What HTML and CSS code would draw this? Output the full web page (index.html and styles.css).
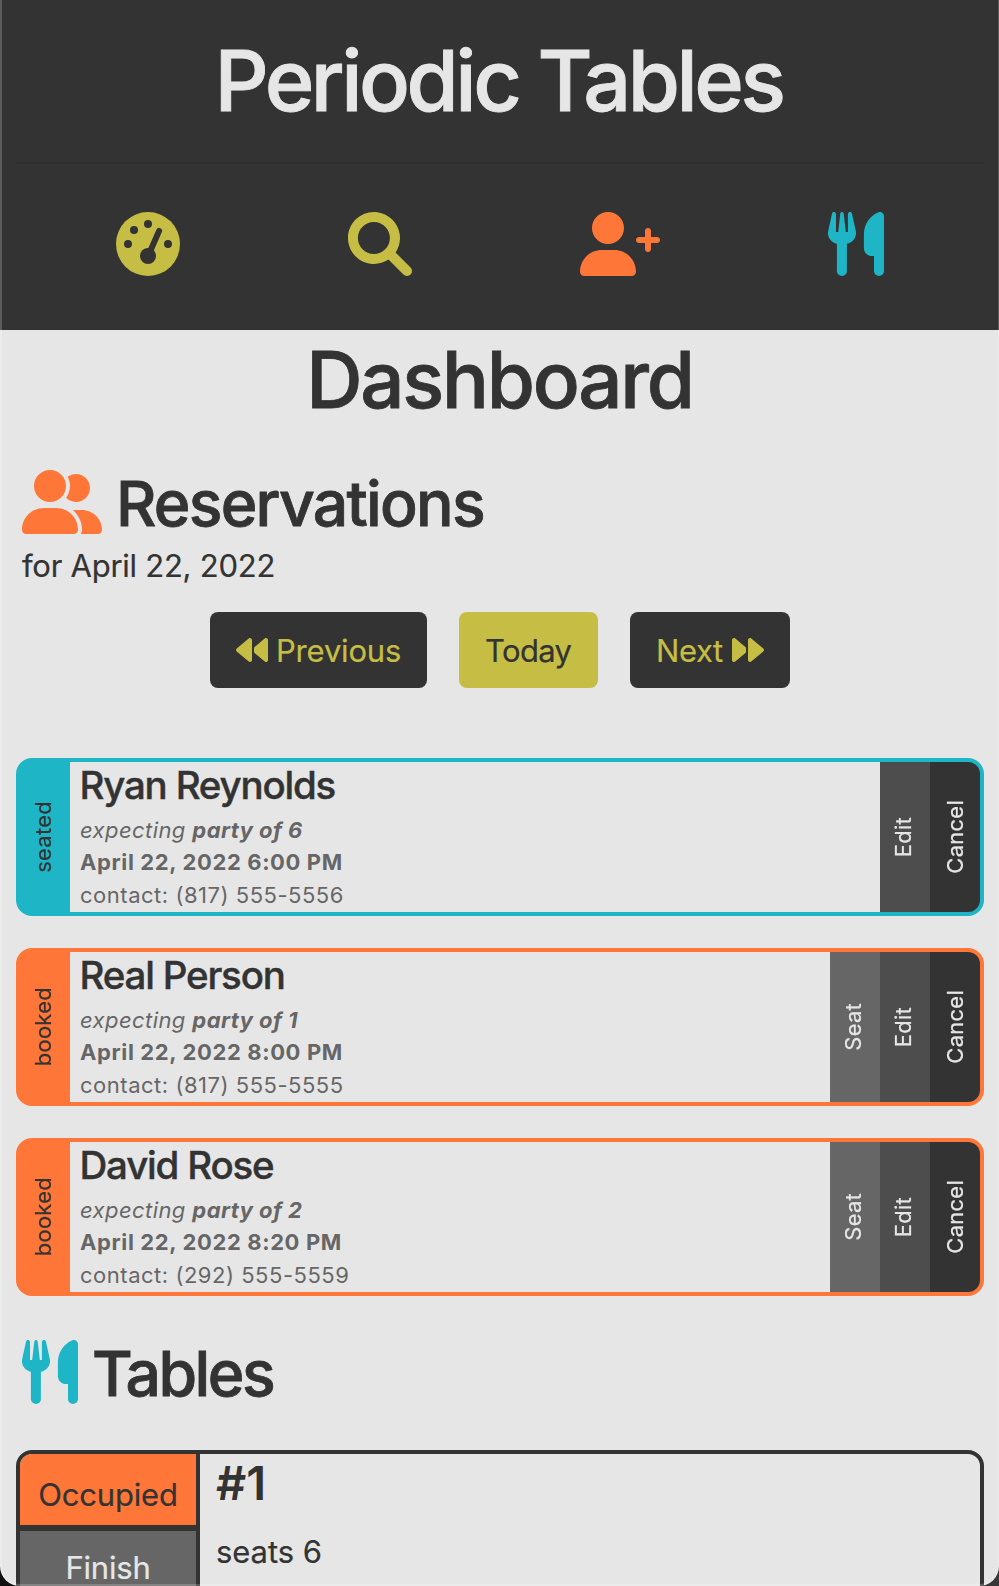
FILE: index.html
```html
<!DOCTYPE html>
<html lang="en">
<head>
<meta charset="utf-8">
<title>Periodic Tables</title>
<link rel="stylesheet" href="styles.css">
</head>
<body>
<svg class="defs" width="0" height="0">
  <symbol id="gauge" viewBox="0 0 512 512">
    <mask id="gauge-mask"><rect width="512" height="512" fill="#fff"/><circle cx="96" cy="256" r="32"/><circle cx="144" cy="144" r="32"/><circle cx="256" cy="96" r="32"/><circle cx="416" cy="256" r="32"/><circle cx="256" cy="352" r="64"/><path d="M345 151L262 340" stroke="#000" stroke-width="48" stroke-linecap="round"/></mask>
    <circle cx="256" cy="256" r="256" mask="url(#gauge-mask)"/>
  </symbol>
  <symbol id="search" viewBox="0 0 512 512"><path d="M500.3 443.7l-119.7-119.7c27.22-40.41 40.65-90.9 33.46-144.7C401.8 87.79 326.8 13.32 235.2 1.723C99.01-15.51-15.51 99.01 1.724 235.2c11.6 91.64 86.08 166.7 177.6 178.9c53.8 7.189 104.3-6.236 144.7-33.46l119.7 119.7c15.62 15.62 40.95 15.62 56.57 0C515.9 484.7 515.9 459.3 500.3 443.7zM79.1 208c0-70.58 57.42-128 128-128s128 57.42 128 128c0 70.58-57.42 128-128 128S79.1 278.6 79.1 208z"/></symbol>
  <symbol id="user-plus" viewBox="0 0 640 512"><path d="M224 256c70.7 0 128-57.31 128-128S294.7 0 224 0S96 57.31 96 128S153.3 256 224 256zM274.7 304H173.3C77.61 304 0 381.6 0 477.3C0 496.5 15.52 512 34.66 512h378.7C432.5 512 448 496.5 448 477.3C448 381.6 370.4 304 274.7 304zM616 200h-48v-48C568 138.8 557.3 128 544 128s-24 10.75-24 24v48h-48C458.8 200 448 210.8 448 224s10.75 24 24 24h48v48C520 309.3 530.8 320 544 320s24-10.75 24-24v-48h48C629.3 248 640 237.3 640 224S629.3 200 616 200z"/></symbol>
  <symbol id="user-group" viewBox="0 0 640 512"><path d="M224 256c70.7 0 128-57.31 128-128S294.7 0 224 0S96 57.31 96 128S153.3 256 224 256zM274.7 304H173.3C77.61 304 0 381.6 0 477.3C0 496.5 15.52 512 34.66 512h378.7C432.5 512 448 496.5 448 477.3C448 381.6 370.4 304 274.7 304zM479.1 320h-73.85C451.2 357.7 480 414.1 480 477.3C480 490.1 476.2 501.9 470 512h138C625.7 512 640 497.6 640 479.1C640 391.6 568.4 320 479.1 320zM432 256C493.9 256 544 205.9 544 144S493.9 32 432 32c-25.11 0-48.04 8.555-66.72 22.51C376.8 76.63 384 101.4 384 128c0 35.52-11.93 68.14-31.59 94.71C372.7 243.2 400.8 256 432 256z"/></symbol>
  <symbol id="utensils" viewBox="0 0 448 512"><path d="M221.6 148.7C224.7 161.3 224.8 174.5 222.1 187.2C219.3 199.1 213.6 211.9 205.6 222.1C191.1 238.6 173 249.1 151.1 254.1V472C151.1 482.6 147.8 492.8 140.3 500.3C132.8 507.8 122.6 512 111.1 512C101.4 512 91.22 507.8 83.71 500.3C76.21 492.8 71.1 482.6 71.1 472V254.1C50.96 250.1 31.96 238.9 18.3 222.4C10.19 212.2 4.529 200.3 1.755 187.5C-1.019 174.7-.8315 161.5 2.303 148.8L32.51 12.45C33.36 8.598 35.61 5.197 38.82 2.9C42.02 .602 45.97-.4297 49.89 .0026C53.82 .4302 57.46 2.303 60.1 5.259C62.74 8.214 64.18 12.04 64.16 16V160H81.53L98.62 11.91C99.02 8.635 100.6 5.621 103.1 3.434C105.5 1.248 108.7 .0401 111.1 .0401C115.3 .0401 118.5 1.248 120.9 3.434C123.4 5.621 124.1 8.635 125.4 11.91L142.5 160H159.1V16C159.1 12.07 161.4 8.268 163.1 5.317C166.6 2.366 170.2 .474 174.1 .0026C178-.4262 181.1 .619 185.2 2.936C188.4 5.253 190.6 8.677 191.5 12.55L221.6 148.7zM448 472C448 482.6 443.8 492.8 436.3 500.3C428.8 507.8 418.6 512 408 512C397.4 512 387.2 507.8 379.7 500.3C372.2 492.8 368 482.6 368 472V352H351.2C342.8 352 334.4 350.3 326.6 347.1C318.9 343.8 311.8 339.1 305.8 333.1C299.9 327.1 295.2 320 291.1 312.2C288.8 304.4 287.2 296 287.2 287.6L287.1 173.8C288 136.9 299.1 100.8 319.8 70.28C340.5 39.71 369.8 16.05 404.1 2.339C408.1 .401 414.2-.3202 419.4 .2391C424.6 .7982 429.6 2.62 433.9 5.546C438.2 8.472 441.8 12.41 444.2 17.03C446.7 21.64 447.1 26.78 448 32V472z"/></symbol>
  <symbol id="backward" viewBox="0 0 512 512"><path d="M459.5 71.41l-171.5 142.9v83.45l171.5 142.9C480.1 457.7 512 443.3 512 415.1V96.03C512 68.66 480.1 54.28 459.5 71.41zM203.5 71.41L11.44 231.4c-15.25 12.87-15.25 36.37 0 49.24l192 159.1c20.63 17.12 52.51 2.749 52.51-24.62v-319.1C255.1 68.66 224.1 54.28 203.5 71.41z"/></symbol>
</svg>

<div class="app">
  <header class="header">
    <h1 class="brand">Periodic Tables</h1>
    <hr class="rule">
    <nav class="nav">
      <svg class="icon lime"><use href="#gauge"/></svg>
      <svg class="icon lime"><use href="#search"/></svg>
      <svg class="icon wide orange"><use href="#user-plus"/></svg>
      <svg class="icon narrow teal"><use href="#utensils"/></svg>
    </nav>
  </header>

  <main class="main">
    <h2 class="page-title">Dashboard</h2>

    <div class="section-head">
      <svg class="icon wide orange"><use href="#user-group"/></svg>
      <h3 class="section-title">Reservations</h3>
    </div>
    <p class="date">for April 22, 2022</p>

    <div class="pager">
      <button class="btn prev"><svg class="arrow"><use href="#backward"/></svg><span>Previous</span></button>
      <button class="btn today">Today</button>
      <button class="btn next"><span>Next</span><svg class="arrow flip"><use href="#backward"/></svg></button>
    </div>

    <div class="reservations">
      <article class="card seated">
        <div class="status"><span class="vert">seated</span></div>
        <div class="info">
          <h4 class="name">Ryan Reynolds</h4>
          <p class="line party">expecting <b>party of 6</b></p>
          <p class="line when">April 22, 2022 6:00 PM</p>
          <p class="line contact">contact: (817) 555-5556</p>
        </div>
        <div class="action edit"><span class="vert">Edit</span></div>
        <div class="action cancel"><span class="vert">Cancel</span></div>
      </article>
      <article class="card booked">
        <div class="status"><span class="vert">booked</span></div>
        <div class="info">
          <h4 class="name">Real Person</h4>
          <p class="line party">expecting <b>party of 1</b></p>
          <p class="line when">April 22, 2022 8:00 PM</p>
          <p class="line contact">contact: (817) 555-5555</p>
        </div>
        <div class="action seat"><span class="vert">Seat</span></div>
        <div class="action edit"><span class="vert">Edit</span></div>
        <div class="action cancel"><span class="vert">Cancel</span></div>
      </article>
      <article class="card booked">
        <div class="status"><span class="vert">booked</span></div>
        <div class="info">
          <h4 class="name">David Rose</h4>
          <p class="line party">expecting <b>party of 2</b></p>
          <p class="line when">April 22, 2022 8:20 PM</p>
          <p class="line contact">contact: (292) 555-5559</p>
        </div>
        <div class="action seat"><span class="vert">Seat</span></div>
        <div class="action edit"><span class="vert">Edit</span></div>
        <div class="action cancel"><span class="vert">Cancel</span></div>
      </article>
    </div>

    <div class="section-head tables-head">
      <svg class="icon narrow teal"><use href="#utensils"/></svg>
      <h3 class="section-title tables-title">Tables</h3>
    </div>

    <article class="table-card">
      <div class="table-side">
        <div class="occupied">Occupied</div>
        <div class="finish">Finish</div>
      </div>
      <div class="table-info">
        <h4 class="table-name">#1</h4>
        <p class="seats">seats 6</p>
      </div>
    </article>
  </main>
</div>
</body>
</html>
```
FILE: styles.css
```css
* { box-sizing: border-box; margin: 0; padding: 0; }

html, body {
  height: 1586px;
  overflow: hidden;
}

body {
  background: linear-gradient(90deg, #101010 50%, #383838 50%);
  color: #333;
  font-family: Inter, "Liberation Sans", sans-serif;
}

.defs { position: absolute; }

.app {
  position: relative;
  height: 1586px;
  overflow: hidden;
  border-radius: 0 0 20px 20px;
  background: #e6e6e6;
}

/* Window edge highlight */
.app::after {
  content: "";
  position: absolute;
  inset: 0;
  border: solid rgba(255, 255, 255, 0.2);
  border-width: 0 1px 2px 2px;
  border-radius: 0 0 20px 20px;
}

.header {
  height: 330px;
  padding: 27px 15px 0 16px;
  background: #333;
}

.brand {
  padding-right: 3px;
  font-size: 84.5px;
  font-weight: 500;
  line-height: 106px;
  letter-spacing: -3.45px;
  text-align: center;
  color: #e6e6e6;
  -webkit-text-stroke: 0.9px;
}

.rule {
  margin-top: 29px;
  border: 0;
  height: 2px;
  background: #2e2e2e;
}

.nav {
  display: flex;
  justify-content: space-around;
  padding: 48px 16px 0;
}

.icon { display: block; width: 64px; height: 64px; flex: none; fill: currentColor; }
.icon.wide { width: 80px; }
.icon.narrow { width: 56px; }
.lime { color: #c6be44; }
.orange { color: #ff7738; }
.teal { color: #1eb6c6; }

.main { padding: 2px 15px 0 16px; }

.page-title {
  padding-right: 1px;
  font-size: 78px;
  font-weight: 500;
  line-height: 96px;
  letter-spacing: -2.25px;
  text-align: center;
  -webkit-text-stroke: 0.8px;
}

.section-head {
  display: flex;
  gap: 13.5px;
  height: 64px;
  margin-top: 42px;
  padding-left: 6.4px;
}

.section-title {
  padding-top: 1px;
  font-size: 62.5px;
  font-weight: 500;
  line-height: 64px;
  letter-spacing: -1.75px;
  -webkit-text-stroke: 0.8px;
}

.date {
  margin-top: 8px;
  padding-left: 6px;
  font-size: 31px;
  line-height: 47px;
  letter-spacing: -0.25px;
}

.pager {
  display: flex;
  justify-content: center;
  gap: 32px;
  margin-top: 23px;
}

.btn {
  display: flex;
  align-items: center;
  height: 76px;
  padding: 1px 26px 0;
  border: 0;
  border-radius: 8px;
  background: #333;
  color: #c6be44;
  font: 400 31px/75px Inter, "Liberation Sans", sans-serif;
  letter-spacing: -0.18px;
}

.date, .btn, .table-side, .seats { -webkit-text-stroke: 0.2px; }

.prev { gap: 8px; width: 217px; }
.today { width: 139px; background: #c6be44; color: #333; letter-spacing: -0.65px; }
.next { justify-content: space-between; width: 160px; letter-spacing: -0.4px; }
.arrow { width: 32px; height: 32px; flex: none; margin-top: -1px; fill: currentColor; }
.flip { transform: scaleX(-1); }

.reservations {
  display: grid;
  gap: 32px;
  margin-top: 70px;
}

.card {
  display: flex;
  height: 158px;
  border: 4px solid;
  border-radius: 16px;
  overflow: hidden;
}

.seated { border-color: #1eb6c6; background: #1eb6c6; }
.booked { border-color: #ff7738; background: #ff7738; }

.status, .action {
  display: flex;
  align-items: center;
  justify-content: center;
  width: 50px;
  flex: none;
}

.status, .seat, .edit { padding-right: 4px; }

.vert {
  writing-mode: vertical-rl;
  transform: rotate(180deg);
  font-size: 22px;
  line-height: 30px;
  letter-spacing: 0.25px;
  -webkit-text-stroke: 0.2px;
}

.action { color: #e6e6e6; }
.seat { background: #666; }
.edit { background: #4d4d4d; }
.cancel { background: #333; }

.info { flex: 1; padding-left: 10px; background: #e6e6e6; }

.name {
  margin-bottom: 6px;
  margin-left: -0.5px;
  font-size: 38.5px;
  font-weight: 500;
  line-height: 46px;
  letter-spacing: -1.2px;
  -webkit-text-stroke: 0.4px;
}

.line {
  font-size: 22px;
  line-height: 32px;
  color: #666;
}

.party { font-style: italic; letter-spacing: 0.42px; }
.party b { font-weight: 700; }
.when { font-weight: 700; letter-spacing: 0.63px; }
.contact { padding-top: 1px; line-height: 33px; letter-spacing: 0.52px; }

.tables-head { margin-top: 44px; }
.tables-title { letter-spacing: -2.55px; }

.table-card {
  display: flex;
  height: 240px;
  margin-top: 46px;
  border: 4px solid #333;
  border-radius: 16px;
  overflow: hidden;
}

.table-side {
  width: 180px;
  border-right: 4px solid #333;
  font-size: 31px;
  letter-spacing: -0.18px;
  text-align: center;
}

.occupied {
  height: 77px;
  padding-top: 5px;
  border-bottom: 6px solid #333;
  background: #ff7738;
  line-height: 71px;
}

.finish {
  height: 160px;
  background: #666;
  color: #e6e6e6;
  line-height: 73px;
}

.table-info { padding-left: 16px; }

.table-name {
  font-size: 47px;
  font-weight: 600;
  line-height: 58px;
}

.seats {
  margin-top: 16px;
  font-size: 31px;
  line-height: 47px;
  letter-spacing: -0.06px;
}
```
